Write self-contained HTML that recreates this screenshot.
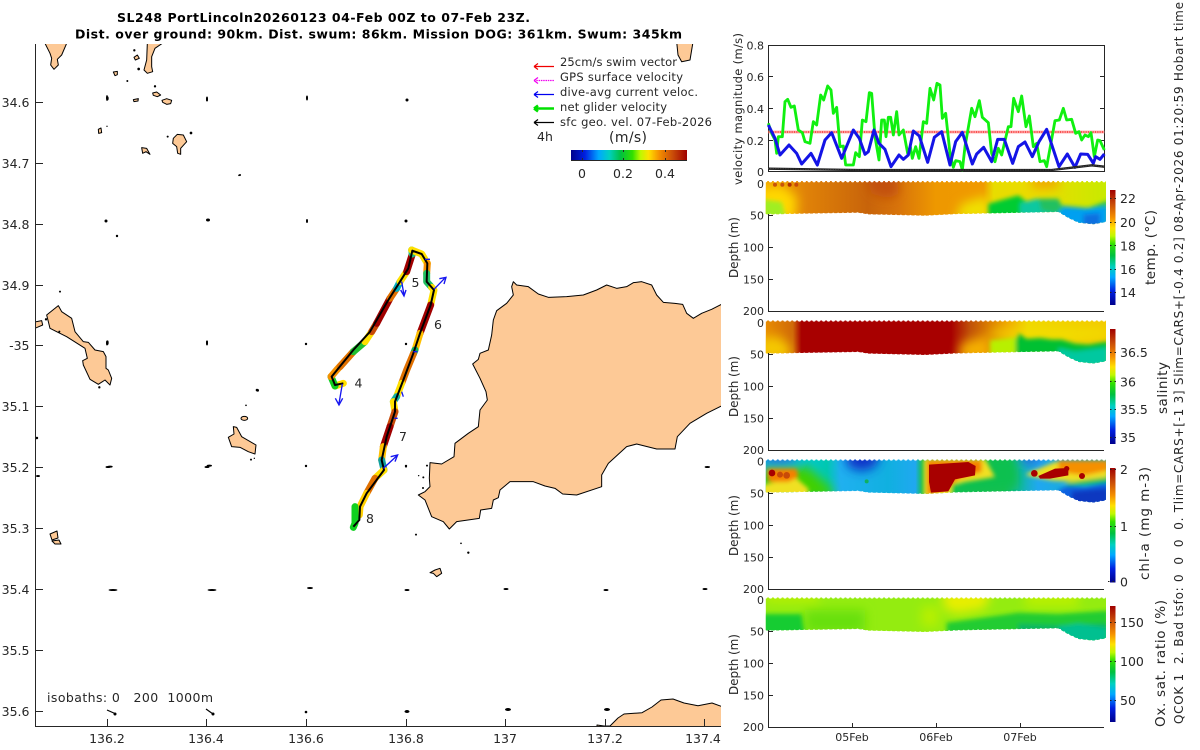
<!DOCTYPE html>
<html><head><meta charset="utf-8"><title>SL248</title>
<style>
html,body{margin:0;padding:0;background:#fff}
svg{display:block}
text{font-family:"DejaVu Sans","Liberation Sans",sans-serif;fill:#262626}
.t{font-size:12.5px}
.s{font-size:11px;text-anchor:end}
.c{font-size:12.5px}
.b{font-weight:bold;font-size:12.5px;fill:#000}
.l{font-size:11.5px}
.land{fill:#fdc996;stroke:#000;stroke-width:3;stroke-linejoin:round}
.ax{stroke:#262626;stroke-width:1;fill:none;shape-rendering:crispEdges}
.dots{fill:#000}
.trk{fill:none;stroke-width:21;stroke-linecap:round;stroke-linejoin:round}
</style></head><body>
<svg width="1200" height="750" viewBox="0 0 1200 750" xmlns="http://www.w3.org/2000/svg">
<defs>
<linearGradient id="cbh" x1="0" x2="1" y1="0" y2="0">
<stop offset="0" stop-color="#00008c"/><stop offset=".12" stop-color="#0020e0"/><stop offset=".24" stop-color="#00a8ff"/><stop offset=".33" stop-color="#00d0c0"/><stop offset=".43" stop-color="#00c040"/><stop offset=".53" stop-color="#30e000"/><stop offset=".6" stop-color="#c0f800"/><stop offset=".67" stop-color="#ffe000"/><stop offset=".76" stop-color="#f59000"/><stop offset=".88" stop-color="#c84a08"/><stop offset="1" stop-color="#a00000"/>
</linearGradient>
<linearGradient id="cbv" x1="0" x2="0" y1="1" y2="0">
<stop offset="0" stop-color="#00008c"/><stop offset=".12" stop-color="#0020e0"/><stop offset=".24" stop-color="#00a8ff"/><stop offset=".33" stop-color="#00d0c0"/><stop offset=".43" stop-color="#00c040"/><stop offset=".53" stop-color="#30e000"/><stop offset=".6" stop-color="#c0f800"/><stop offset=".67" stop-color="#ffe000"/><stop offset=".76" stop-color="#f59000"/><stop offset=".88" stop-color="#c84a08"/><stop offset="1" stop-color="#a00000"/>
</linearGradient>
<linearGradient id="gt" x1="122" x2="1143" y1="0" y2="0" gradientUnits="userSpaceOnUse">
<stop offset="0" stop-color="#f2a400"/><stop offset=".12" stop-color="#e08208"/><stop offset=".3" stop-color="#c8640a"/><stop offset=".39" stop-color="#d8740a"/><stop offset=".5" stop-color="#ee9800"/><stop offset=".64" stop-color="#f09a00"/><stop offset=".67" stop-color="#e8dc00"/><stop offset=".81" stop-color="#eadc00"/><stop offset="1" stop-color="#c8ea00"/>
</linearGradient>
<linearGradient id="gs" x1="122" x2="1143" y1="0" y2="0" gradientUnits="userSpaceOnUse">
<stop offset="0" stop-color="#e88c00"/><stop offset=".08" stop-color="#d06a08"/><stop offset=".105" stop-color="#a80000"/><stop offset=".545" stop-color="#a80000"/><stop offset=".6" stop-color="#c05008"/><stop offset=".66" stop-color="#dc8000"/><stop offset=".71" stop-color="#f0a800"/><stop offset=".77" stop-color="#f0d800"/><stop offset="1" stop-color="#f2ca00"/>
</linearGradient>
<linearGradient id="gc" x1="122" x2="1143" y1="0" y2="0" gradientUnits="userSpaceOnUse">
<stop offset="0" stop-color="#00a8e8"/><stop offset=".14" stop-color="#00c8c8"/><stop offset=".18" stop-color="#00c8b0"/><stop offset=".22" stop-color="#20b0f0"/><stop offset=".36" stop-color="#10b0e0"/><stop offset=".44" stop-color="#20a8f0"/><stop offset=".46" stop-color="#10c050"/><stop offset=".7" stop-color="#10c050"/><stop offset=".74" stop-color="#10b8a0"/><stop offset=".8" stop-color="#20a8f0"/><stop offset="1" stop-color="#10b0c0"/>
</linearGradient>
<filter id="b" filterUnits="userSpaceOnUse" x="0" y="-80" width="1300" height="300"><feGaussianBlur stdDeviation="16"/></filter>
<filter id="b2" filterUnits="userSpaceOnUse" x="0" y="-80" width="1300" height="300"><feGaussianBlur stdDeviation="6"/></filter>
<clipPath id="cs"><path d="M122,-8H1143V115L1105,122 1060,117 1030,103 1000,85 700,91 600,96 430,92 400,87 122,92Z"/></clipPath>
<clipPath id="cm"><rect x="36" y="44" width="685" height="682"/></clipPath>
<g id="edge" fill="none" stroke="#fff" stroke-linecap="round">
<path stroke-width="10" stroke-dasharray="0 14.5" d="M122,-9H1145"/>
<path stroke-width="7" stroke-dasharray="0 14.5" d="M122,94 400,89 430,94 600,98 700,93 1000,87 1030,105 1060,119 1105,124 1143,117"/>
</g>
</defs>
<rect width="1200" height="750" fill="#fff"/>

<!-- MAP -->
<g clip-path="url(#cm)">
<g transform="scale(.33333)">
<path class="land" d="M135,130L200,130 185,165 172,178 175,195 162,208 152,195 155,175 150,160Z"/>
<path class="land" d="M442,130L487,130 465,145 455,170 455,200 458,215 442,220 432,210 440,180Z"/>
<path class="land" d="M402,172L412,165 418,175 406,180Z"/>
<path class="land" d="M340,216L352,214 352,224 345,227Z"/>
<path class="land" d="M458,279L470,276 482,285 472,290 460,286Z"/>
<path class="land" d="M486,301L500,296 515,301 512,311 500,313 488,307Z"/>
<path class="land" d="M400,299L415,296 414,303 402,305Z"/>
<path class="land" d="M295,388L303,384 305,398 296,400Z"/>
<path class="land" d="M520,415L532,403 550,405 560,425 542,445 542,463 533,460 530,440 518,430Z"/>
<path class="land" d="M425,443L440,445 450,463 438,455 428,460Z"/>
<g class="dots"><circle cx="403" cy="151" r="3.5"/><circle cx="416" cy="207" r="4"/><circle cx="382" cy="243" r="3"/><circle cx="465" cy="259" r="3.5"/><ellipse cx="323" cy="295" rx="3" ry="6"/><ellipse cx="621" cy="298" rx="3" ry="6"/><circle cx="321" cy="379" r="2"/><circle cx="503" cy="410" r="3"/><circle cx="573" cy="399" r="4"/><circle cx="717" cy="526" r="2.5"/>
</g>
</g>
<g transform="translate(0,290) scale(.33333)">
<path class="land" d="M140,75L175,47 185,65 215,85 225,125 250,155 265,157 285,180 310,185 318,200 318,235 325,240 335,265 330,285 315,270 295,283 270,268 250,225 248,212 262,205 255,175 200,140 170,125 150,115 145,95Z"/>
<path class="land" d="M100,97L125,92 128,105 100,117Z"/>
<path class="land" d="M700,410L710,412 725,440 768,465 765,492 745,485 720,472 695,470 685,442 702,432Z"/>
<ellipse class="land" cx="733" cy="385" rx="10" ry="6"/>
<g class="dots"><circle cx="180" cy="5" r="3"/><ellipse cx="323" cy="158" rx="3" ry="7"/><ellipse cx="621" cy="158" rx="3" ry="7"/><circle cx="773" cy="301" r="4"/><circle cx="738" cy="346" r="2.5"/><circle cx="298" cy="292" r="3.5"/><circle cx="110" cy="444" r="3.5"/><ellipse cx="330" cy="530" rx="8" ry="3"/><ellipse cx="628" cy="527" rx="8" ry="3"/><circle cx="753" cy="509" r="3"/><circle cx="763" cy="505" r="2"/><circle cx="138" cy="88" r="3.5"/><circle cx="178" cy="125" r="3"/></g>
</g>
<g transform="translate(400,270) scale(.33333)">
<path class="land" d="M970,100L935,118 905,130 880,145 860,130 848,103 825,100 790,97 770,75 755,45 725,35 700,38 680,50 650,55 620,45 590,60 550,75 500,80 445,82 415,72 385,50 350,45 340,35 335,50 340,75 320,100 290,122 280,150 275,195 265,240 240,250 235,268 218,282 240,325 258,365 262,390 240,420 235,470 205,490 165,520 162,560 125,582 90,578 88,625 90,650 75,665 55,675 75,690 95,740 130,755 148,777 170,755 238,745 242,720 275,715 280,690 295,683 300,660 330,635 400,635 435,648 465,655 488,672 530,675 605,650 605,615 625,580 680,530 710,522 770,537 825,537 832,500 870,460 920,430 970,405Z"/>
<path class="land" d="M90,908L105,900 120,895 125,910 110,920 100,910Z"/>
<g class="dots"><circle cx="18" cy="590" r="3"/><circle cx="81" cy="587" r="3"/><circle cx="56" cy="617" r="2"/><circle cx="70" cy="622" r="3"/><circle cx="69" cy="654" r="3"/><circle cx="48" cy="794" r="3"/><circle cx="183" cy="820" r="2.5"/><circle cx="205" cy="848" r="3.5"/><ellipse cx="922" cy="591" rx="8" ry="3"/></g>
</g>
<path class="land" style="stroke-width:1" d="M676.7,42L693,42 690,60 681.7,61.7 678,55Z"/>
<path class="land" style="stroke-width:1" d="M597,725L604,726 610,726 618,718 624,714 642,712.7 652,707 661,700 673,699 684,703 698,705.7 712,703 723,707V728H597Z"/>
<path class="land" style="stroke-width:1" d="M50,534L57,531 58,538 52,540Z"/>
<path class="land" style="stroke-width:1" d="M52,541L59,540 61,544 55,544Z"/>
<g class="dots">
<circle cx="240" cy="175" r="1"/><circle cx="257" cy="390" r="1.3"/><circle cx="37" cy="438" r="1.2"/><ellipse cx="38" cy="476" rx="2" ry="1"/>
<ellipse cx="107" cy="98" rx="1" ry="3"/><ellipse cx="207" cy="99" rx="1" ry="2.5"/><ellipse cx="307" cy="98" rx="1" ry="2.5"/><ellipse cx="407" cy="100" rx="1.5" ry="1.5"/>
<ellipse cx="106" cy="221" rx="1.5" ry="1.5"/><ellipse cx="208" cy="220" rx="2" ry="1.5"/><ellipse cx="307" cy="221" rx="1" ry="2"/><ellipse cx="406" cy="221" rx="1.5" ry="1.5"/><circle cx="117" cy="236" r="1.2"/>
<ellipse cx="107" cy="343" rx="1" ry="2.5"/><ellipse cx="207" cy="343" rx="1" ry="2.5"/><circle cx="306" cy="344" r="1.2"/><circle cx="406" cy="344" r="1.2"/>
<ellipse cx="108" cy="467" rx="2.5" ry="1"/><ellipse cx="207" cy="467" rx="2.5" ry="1"/><circle cx="306" cy="466" r="1.2"/><circle cx="406" cy="466" r="1.2"/>
<ellipse cx="113" cy="590" rx="4.5" ry="1"/><ellipse cx="212" cy="590" rx="4.5" ry="1"/><ellipse cx="310" cy="588" rx="3" ry="1"/><ellipse cx="407" cy="590" rx="2.5" ry="1"/><ellipse cx="506" cy="589" rx="2.5" ry="1"/><ellipse cx="606" cy="590" rx="2.5" ry="1"/><ellipse cx="705" cy="589" rx="2.5" ry="1"/>
</g>
<path d="M107,710L116,714" stroke="#000" stroke-width="1.2"/><circle cx="115" cy="714" r="1.5"/>
<path d="M206,709L213,714" stroke="#000" stroke-width="1.2"/><circle cx="213" cy="714" r="1.5"/>
<circle cx="306" cy="712" r="1.3"/><ellipse cx="407" cy="711.5" rx="2.5" ry="1.5"/><ellipse cx="508" cy="709.5" rx="3" ry="1.5"/><ellipse cx="607" cy="709.5" rx="3" ry="1.5"/>
</g>

<!-- TRACK -->
<g transform="translate(300,230) scale(.33333)">
<g class="trk">
<path stroke="#ffe000" d="M130,460L105,468"/>
<path stroke="#10d020" d="M105,468L93,440"/>
<path stroke="#f59000" d="M93,440L110,420 160,365"/>
<path stroke="#e07000" d="M120,410L160,365"/>
<path stroke="#20c030" d="M160,365L195,335"/>
<path stroke="#ffe000" d="M195,335L215,305"/>
<path stroke="#c84a08" d="M215,305L230,280"/>
<path stroke="#a00000" d="M230,280L270,205"/>
<path stroke="#e07000" d="M270,205L290,175"/>
<path stroke="#00b0c0" d="M290,175L300,155"/>
<path stroke="#ffe000" d="M300,155L320,125"/>
<path stroke="#a00000" d="M320,125L337,72"/>
<path stroke="#20c080" d="M337,72L335,60"/>
<path stroke="#ffe000" d="M335,60L365,72 382,100"/>
<path stroke="#f59000" d="M382,100L380,130"/>
<path stroke="#20c060" d="M380,130L380,155 395,172"/>
<path stroke="#ffe000" d="M395,172L402,180 392,225"/>
<path stroke="#a00000" d="M392,225L360,310"/>
<path stroke="#ffc000" d="M360,310L345,360"/>
<path stroke="#10b060" d="M345,360L340,372"/>
<path stroke="#e07000" d="M340,372L320,420 305,460"/>
<path stroke="#ffe000" d="M305,460L290,500"/>
<path stroke="#10b0a0" d="M290,500L280,515"/>
<path stroke="#ffe000" d="M280,515L285,545"/>
<path stroke="#c84a08" d="M285,545L270,590"/>
<path stroke="#a00000" d="M270,590L250,650"/>
<path stroke="#ffc000" d="M250,650L245,690"/>
<path stroke="#10a0a0" d="M245,690L252,720"/>
<path stroke="#ffe000" d="M252,720L225,745"/>
<path stroke="#e07000" d="M225,745L200,790"/>
<path stroke="#ffd000" d="M200,790L180,830 178,855"/>
<path stroke="#10d020" d="M165,830L165,880 160,892"/>
</g>
<path fill="none" stroke="#000" stroke-width="6" stroke-linejoin="round" d="M130,460L105,465 95,440 160,360 210,305 265,210 300,155 325,115 337,62 365,72 382,100 380,155 402,180 392,225 360,310 340,370 310,450 285,515 285,545 260,620 245,690 252,720 200,790 180,830 178,870 160,890"/>
<g fill="none" stroke="#1515f0" stroke-width="4">
<path d="M127,462L117,520M106,505L117,525 128,505"/>
<path d="M305,155L312,195M302,180L312,198 318,180"/>
<path d="M402,178L434,145M418,146L438,142 432,162"/>
<path d="M250,715L290,678M272,680L293,675 285,695"/>
<path d="M305,485L310,500M375,88H390M283,565H293M340,365H352"/>
</g>
</g>
<text class="t" x="354.5" y="387.5">4</text>
<text class="t" x="411.5" y="287">5</text>
<text class="t" x="434" y="329">6</text>
<text class="t" x="399" y="441">7</text>
<text class="t" x="366" y="523">8</text>

<!-- MAP AXES -->
<path class="ax" d="M35.5,44V726.5H721"/>
<path class="ax" d="M36,102.5H43M36,163.5H43M36,224.5H43M36,285.5H43M36,345.5H43M36,406.5H43M36,467.5H43M36,528.5H43M36,589.5H43M36,650.5H43M36,711.5H43"/>
<path class="ax" d="M107.5,726V719M206.5,726V719M306.5,726V719M406.5,726V719M505.5,726V719M605.5,726V719M704.5,726V719"/>
<g class="t" text-anchor="end">
<text x="29.5" y="107">34.6</text><text x="29.5" y="168">34.7</text><text x="29.5" y="229">34.8</text><text x="29.5" y="290">34.9</text><text x="29.5" y="350">-35</text><text x="29.5" y="411">35.1</text><text x="29.5" y="472">35.2</text><text x="29.5" y="533">35.3</text><text x="29.5" y="594">35.4</text><text x="29.5" y="655">35.5</text><text x="29.5" y="716">35.6</text>
</g>
<g class="t" text-anchor="middle">
<text x="107" y="743">136.2</text><text x="206" y="743">136.4</text><text x="306" y="743">136.6</text><text x="406" y="743">136.8</text><text x="505" y="743">137</text><text x="605" y="743">137.2</text><text x="703" y="743">137.4</text>
</g>
<text x="47" y="702" class="t" textLength="166" xml:space="preserve">isobaths: 0   200  1000m</text>

<!-- TITLE -->
<text class="b" x="117" y="22" textLength="413">SL248 PortLincoln20260123 04-Feb 00Z to 07-Feb 23Z.</text>
<text class="b" x="75" y="38.5" textLength="607">Dist. over ground: 90km. Dist. swum: 86km. Mission DOG: 361km. Swum: 345km</text>

<!-- LEGEND -->
<g class="l">
<text x="560" y="66" textLength="117">25cm/s swim vector</text>
<text x="560" y="81" textLength="123">GPS surface velocity</text>
<text x="560" y="96" textLength="138">dive-avg current veloc.</text>
<text x="560" y="111" textLength="107">net glider velocity</text>
<text x="560" y="126" textLength="152">sfc geo. vel. 07-Feb-2026</text>
</g>
<g fill="none" stroke-width="1.2">
<path stroke="#f00000" d="M534,66.5H554M534,66.5L538,63.5M534,66.5L538,69.5"/>
<path stroke="#f000f0" stroke-dasharray="1.5 .8" d="M534,80.5H554"/><path stroke="#f000f0" d="M534,80.5L538,77.5M534,80.5L538,83.5"/>
<path stroke="#0000f0" d="M534,94.5H554M534,94.5L538,91.5M534,94.5L538,97.5"/>
<path stroke="#00e000" stroke-width="2.5" d="M534,108.5H554M534,108.5L538,105.5M534,108.5L538,111.5"/>
<path stroke="#000" d="M534,122.5H554M534,122.5L538,119.5M534,122.5L538,125.5"/>
</g>
<text class="c" x="537" y="141" font-size="12">4h</text>
<text x="609" y="142" font-size="14" textLength="38">(m/s)</text>
<rect x="571" y="150" width="116" height="10.5" fill="url(#cbh)"/>
<path class="ax" d="M582.5,150V152M623.5,150V152M665.5,150V152M582.5,160V158M623.5,160V158M665.5,160V158M571,160.5H687"/>
<g class="c" text-anchor="middle"><text x="582" y="178">0</text><text x="623" y="178">0.2</text><text x="665" y="178">0.4</text></g>

<!-- VELOCITY -->
<rect x="768.5" y="45.5" width="336" height="126" fill="#fff" stroke="#262626" stroke-width="1" shape-rendering="crispEdges"/>
<path class="ax" d="M769,76.5H773M769,108.5H773M769,140.5H773M1104,76.5H1100M1104,108.5H1100M1104,140.5H1100"/>
<g transform="translate(725,30) scale(.33333)" fill="none">
<path stroke="#ffa0a0" stroke-width="8" d="M130,306H1138"/>
<path stroke="#f00000" stroke-width="3" stroke-dasharray="3 4" d="M130,306H1138"/>
<path stroke="#10f010" stroke-width="8.5" stroke-linejoin="round" d="M130,280 140,310 150,330 155,370 160,320 172,320 180,215 188,208 198,232 208,228 220,300 232,308 240,335 255,340 265,275 275,285 287,195 296,210 308,168 318,180 325,250 335,232 345,350 355,348 362,405 385,405 392,368 403,380 412,270 423,275 433,188 440,190 450,320 462,390 470,270 478,270 483,320 490,262 497,262 505,315 515,245 522,315 535,300 548,370 556,350 562,385 572,350 582,385 595,275 605,280 615,175 626,210 636,160 645,165 652,265 662,250 675,370 685,412 692,392 705,395 712,420 720,350 740,235 750,260 763,212 772,262 790,278 800,370 810,395 820,355 830,375 850,290 858,290 866,205 880,245 890,198 903,290 913,258 925,350 935,340 945,395 958,392 965,410 975,355 990,272 1003,270 1015,235 1025,270 1040,268 1052,310 1062,305 1070,330 1080,315 1090,320 1098,308 1108,380 1118,330 1125,332 1138,360"/>
<path stroke="#1414e6" stroke-width="9" stroke-linejoin="round" d="M130,285 150,325 165,375 192,345 215,370 230,402 258,370 277,405 300,330 320,308 350,385 385,300 403,325 420,373 430,365 447,300 462,340 480,358 498,410 522,375 535,388 550,375 565,303 583,318 608,397 628,322 650,305 675,405 692,335 712,307 742,402 755,372 776,352 800,395 818,328 838,328 863,400 880,350 900,336 922,380 942,335 965,298 1002,410 1027,372 1050,412 1067,372 1088,373 1105,400 1112,380 1125,388 1138,372"/>
<path stroke="#202020" stroke-width="7" d="M130,416 400,420 980,420 1050,412 1100,406 1138,410"/>
<path stroke="#808080" stroke-width="1.5" stroke-dasharray="2 3" d="M130,416 400,420 980,420 1050,412 1100,406 1138,410"/>
</g>
<g class="s">
<text x="764" y="49.5">0.8</text><text x="764" y="81">0.6</text><text x="764" y="113">0.4</text><text x="764" y="145">0.2</text><text x="764" y="176">0</text>
</g>
<text transform="translate(742,185) rotate(-90)" font-size="11.5" textLength="152">velocity magnitude (m/s)</text>

<!-- TEMP SECTION -->
<g transform="translate(725,183.7) scale(.33333)">
<g clip-path="url(#cs)">
<rect x="122" y="-10" width="1022" height="140" fill="url(#gt)"/>
<g filter="url(#b)">
<path fill="#ffd800" d="M100,15L170,5 215,40 210,110H100Z"/>
<path fill="#c25008" d="M420,-30H520V30L490,45 440,30Z"/>
<path fill="#f0e000" d="M690,110L710,60 790,35 800,110Z"/>
<path fill="#f0a000" d="M920,-20H1000V12H920Z"/>
</g>
<g filter="url(#b2)">
<path fill="#a0ee20" d="M100,45L170,55 185,110H100Z"/>
<path fill="#00cc30" d="M790,60L880,35 900,50 910,110H790Z"/>
<path fill="#10c8a0" d="M885,58L935,45 1000,60 1010,110H885Z"/>
<path fill="#20c060" d="M940,45L1000,45 1010,65 1090,72 1150,50 1150,72 1090,85 1000,90 950,80Z"/>
<path fill="#00a0f0" d="M1000,85L1015,70 1080,75 1150,68 1150,130H1000Z"/>
<path fill="#0870e0" d="M1075,92L1125,88 1125,130H1075Z"/>
</g>
<g fill="#c85408"><circle cx="150" cy="3" r="6"/><circle cx="172" cy="3" r="6"/></g><circle cx="194" cy="3" r="6" fill="#b03000"/><circle cx="214" cy="3" r="6" fill="#c84a08"/>
</g>
<use href="#edge"/>
</g>
<!-- SAL SECTION -->
<g transform="translate(725,323) scale(.33333)">
<g clip-path="url(#cs)">
<rect x="122" y="-10" width="1022" height="140" fill="url(#gs)"/>
<g filter="url(#b)">
<path fill="#f5c800" d="M100,45L160,40 195,70 195,110H100Z"/>
<path fill="#f5b000" d="M700,110L710,60 790,38 800,110Z"/>
<path fill="#f2e000" d="M800,25 1150,20V40L1000,50 800,40Z"/>
</g>
<g filter="url(#b2)">
<path fill="#b8f000" d="M795,52L880,42 880,110H795Z"/>
<path fill="#00c030" d="M872,50L882,32 905,48 945,45 980,50 1010,50 1050,62 1090,65 1150,55 1150,95 1000,110H872Z"/>
<path fill="#00c8a0" d="M1000,75L1050,85 1150,72 1150,130H1000Z"/>
</g>
</g>
<use href="#edge"/>
</g>
<!-- CHL SECTION -->
<g transform="translate(725,462) scale(.33333)">
<g clip-path="url(#cs)">
<rect x="122" y="-10" width="1022" height="140" fill="url(#gc)"/>
<g filter="url(#b)">
<path fill="#0830c8" d="M360,-30H470L450,15 410,28 370,15Z"/>
<path fill="#2070e0" d="M122,-30H220L200,5 130,10Z"/>
<path fill="#40d000" d="M110,15H250L320,80 320,110H110Z"/>
<path fill="#2070e0" d="M880,-30H960L930,8H890Z"/>
<path fill="#10c050" d="M780,-20H880L880,80 800,90 690,100 700,55Z"/>
</g>
<g filter="url(#b2)">
<path fill="#f0e020" d="M110,70L210,45 250,80 250,110H110Z"/>
<path fill="#f58000" d="M126,20H215L220,45 190,60H130Z"/>
<path fill="#f0e020" d="M596,-10H780L810,45 720,60 685,70 680,110H596Z"/>
<path fill="#f58000" d="M606,-5H770L770,30 700,50 670,80 606,100Z"/>
<path fill="#f0e020" d="M905,35L990,0 1150,-5 1150,50 1090,65 1060,60 980,55 905,40Z"/>
<path fill="#f59000" d="M1000,-5H1150V25L1080,40 1000,30Z"/>
<path fill="#1060e0" d="M1000,85L1030,70 1080,75 1150,60 1150,130H1000Z"/>
<path fill="#0838c0" d="M1040,88L1150,78 1150,130H1040Z"/>
<path fill="#10c050" d="M1020,62L1150,45 1150,62 1030,72Z"/>
</g>
<path fill="#a80000" d="M612,8L730,0 752,12 750,40 690,52 670,88 618,92 612,60Z"/>
<path fill="#a80000" d="M940,42L990,20 1030,18 1030,40 975,50 945,50Z"/>
<circle cx="141" cy="33" r="10" fill="#a80000"/><circle cx="165" cy="38" r="9" fill="#c84a08"/><circle cx="185" cy="40" r="10" fill="#c84a08"/><circle cx="928" cy="34" r="10" fill="#a80000"/><circle cx="1071" cy="42" r="9" fill="#a80000"/><circle cx="1025" cy="20" r="8" fill="#a80000"/><circle cx="425" cy="58" r="6" fill="#10b060"/>
</g>
<use href="#edge"/>
</g>
<!-- OX SECTION -->
<g transform="translate(725,600) scale(.33333)">
<g clip-path="url(#cs)">
<rect x="122" y="-10" width="1022" height="140" fill="#94ec10"/>
<g filter="url(#b)">
<path fill="#e8ee00" d="M650,-30H800L780,25 700,40 660,30Z"/>
<path fill="#b8f000" d="M122,-30H280V8H122ZM900,-30H1060V22H900ZM590,20H640V80H590Z"/>
<path fill="#68e010" d="M240,30H420V100H240Z"/>
</g>
<g filter="url(#b2)">
<path fill="#18cc30" d="M110,42L230,42 240,110H110Z"/>
<path fill="#20cc30" d="M665,68L760,55 880,38 1000,42 1150,32 1150,70 1000,110H665Z"/>
<path fill="#10b860" d="M880,70L1000,75 1150,70 1150,85 1000,110H880Z"/>
<path fill="#00c090" d="M1000,80L1060,70 1150,85 1150,130H1000Z"/>
</g>
</g>
<use href="#edge"/>
</g>

<!-- SECTION AXES -->
<path class="ax" d="M768.5,214V311.5H1104M769,247.5H773M769,279.5H773M769,215.5H773"/>
<path class="ax" d="M768.5,353V450.5H1104M769,386.5H773M769,418.5H773M769,354.5H773"/>
<path class="ax" d="M768.5,492V589.5H1104M769,525.5H773M769,557.5H773M769,493.5H773"/>
<path class="ax" d="M768.5,630V727.5H1104M769,663.5H773M769,695.5H773M769,631.5H773M852.5,727V723M936.5,727V723M1020.5,727V723"/>
<g class="s">
<text x="764" y="188">0</text><text x="764" y="219.5">50</text><text x="764" y="251.5">100</text><text x="764" y="283.5">150</text><text x="764" y="315">200</text>
<text x="764" y="327">0</text><text x="764" y="358.5">50</text><text x="764" y="390.5">100</text><text x="764" y="422.5">150</text><text x="764" y="454">200</text>
<text x="764" y="465.5">0</text><text x="764" y="497.5">50</text><text x="764" y="529.5">100</text><text x="764" y="561.5">150</text><text x="764" y="593">200</text>
<text x="764" y="604">0</text><text x="764" y="635.5">50</text><text x="764" y="667.5">100</text><text x="764" y="699.5">150</text><text x="764" y="731">200</text>
</g>
<g font-size="11" text-anchor="middle"><text x="852" y="741">05Feb</text><text x="936" y="741">06Feb</text><text x="1020" y="741">07Feb</text></g>
<g font-size="12">
<text transform="translate(738,278) rotate(-90)" textLength="61">Depth (m)</text>
<text transform="translate(738,417) rotate(-90)" textLength="61">Depth (m)</text>
<text transform="translate(738,556) rotate(-90)" textLength="61">Depth (m)</text>
<text transform="translate(738,695) rotate(-90)" textLength="61">Depth (m)</text>
</g>

<!-- COLOURBARS -->
<rect x="1110" y="190" width="5.5" height="115" fill="url(#cbv)"/>
<rect x="1110" y="329" width="5.5" height="115" fill="url(#cbv)"/>
<rect x="1110" y="468" width="5.5" height="114.5" fill="url(#cbv)"/>
<rect x="1110" y="606" width="5.5" height="116" fill="url(#cbv)"/>
<path d="M1110,198.5H1116M1110,222.5H1116M1110,245.5H1116M1110,269.5H1116M1110,292.5H1116M1110,352.5H1116M1110,381.5H1116M1110,409.5H1116M1110,437.5H1116M1110,469.5H1116M1110,526.5H1116M1108,581.5H1116M1110,622.5H1116M1110,661.5H1116M1110,700.5H1116" stroke="#222" stroke-width="1" stroke-dasharray="1.5 3" shape-rendering="crispEdges"/>
<g class="c">
<text x="1120" y="203">22</text><text x="1120" y="227">20</text><text x="1120" y="250.5">18</text><text x="1120" y="274">16</text><text x="1120" y="297">14</text>
<text x="1120" y="357">36.5</text><text x="1120" y="386.5">36</text><text x="1120" y="414">35.5</text><text x="1120" y="442">35</text>
<text x="1120" y="474">2</text><text x="1120" y="531">1</text><text x="1120" y="586.5">0</text>
<text x="1120" y="627">150</text><text x="1120" y="666">100</text><text x="1120" y="705">50</text>
</g>
<g font-size="13.5">
<text transform="translate(1155,285) rotate(-90)" textLength="75">temp. (°C)</text>
<text transform="translate(1167,414) rotate(-90)" textLength="52">salinity</text>
<text transform="translate(1149,580) rotate(-90)" textLength="113">chl-a (mg m-3)</text>
<text transform="translate(1165,727) rotate(-90)" textLength="127">Ox. sat. ratio (%)</text>
</g>
<text transform="translate(1183,724) rotate(-90)" font-size="12" textLength="722" xml:space="preserve">QCOK 1  2. Bad tsfo: 0  0  0  0. Tlim=CARS+[-1 3] Slim=CARS+[-0.4 0.2] 08-Apr-2026 01:20:59 Hobart time</text>
</svg>
</body></html>
